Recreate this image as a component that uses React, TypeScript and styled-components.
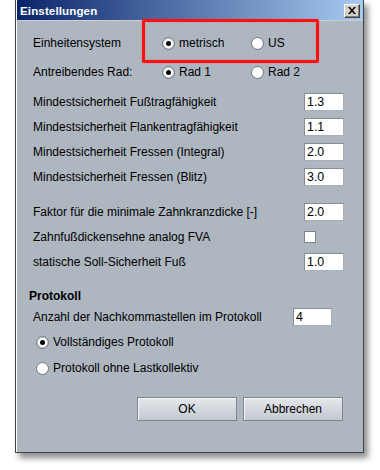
import React from "react";
import styled, { createGlobalStyle, css } from "styled-components";

const GlobalStyle = createGlobalStyle`
  html, body {
    margin: 0;
    padding: 0;
    background: #ffffff;
  }
  body {
    font-family: "Liberation Sans", Arial, sans-serif;
    font-size: 12px;
    color: #000;
  }
`;

const Page = styled.div`
  position: relative;
  width: 380px;
  height: 470px;
  overflow: hidden;
`;

const Window = styled.div`
  margin-left: 15px;
  width: 349px;
  box-sizing: border-box;
  border: 1px solid #3f4246;
  border-top: 0;
  background: #aeb6c0;
  box-shadow: inset 1px 0 0 #ffffff, 4px 5px 6px rgba(0, 0, 0, 0.45);
  display: flex;
  flex-direction: column;
`;

const TitleBar = styled.div`
  height: 20px;
  margin-left: 1px;
  display: flex;
  align-items: center;
  justify-content: space-between;
  padding: 0 3px 0 3px;
  background: linear-gradient(to right, #0a246a, #a6caf0);
  border-bottom: 1px solid #c9d0d8;
`;

const Title = styled.span`
  color: #ffffff;
  font-weight: bold;
  font-size: 11.6px;
  letter-spacing: 0.1px;
`;

const CloseButton = styled.div`
  width: 16px;
  height: 14px;
  box-sizing: border-box;
  margin-top: 1px;
  background: #d4d0c8;
  border: 1px solid;
  border-color: #ffffff #404040 #404040 #ffffff;
  box-shadow: inset -1px -1px 0 #808080;
  display: flex;
  align-items: center;
  justify-content: center;
`;

const Body = styled.div`
  display: flex;
  flex-direction: column;
  padding: 0 19px 31px 17px;
`;

const Row = styled.div<{ $top: number; $h?: number }>`
  display: flex;
  align-items: center;
  justify-content: space-between;
  height: ${(p) => p.$h ?? 18}px;
  margin-top: ${(p) => p.$top}px;
`;

const RadioRow = styled.div<{ $top: number }>`
  display: grid;
  grid-template-columns: 129px 89px 1fr;
  align-items: center;
  height: 18px;
  margin-top: ${(p) => p.$top}px;
`;

const Label = styled.span`
  white-space: nowrap;
`;

const Heading = styled.div<{ $top: number }>`
  font-weight: bold;
  height: 16px;
  line-height: 16px;
  margin-top: ${(p) => p.$top}px;
  margin-left: -4px;
`;

const AnzahlRow = styled.div<{ $top: number }>`
  display: grid;
  grid-template-columns: 260px 39px;
  align-items: center;
  height: 18px;
  margin-top: ${(p) => p.$top}px;
`;

const Field = styled.div<{ $w?: number }>`
  width: ${(p) => p.$w ?? 40}px;
  height: 18px;
  box-sizing: border-box;
  background: #ffffff;
  border: 1px solid #868c94;
  border-right-color: #a9afb6;
  border-bottom-color: #a9afb6;
  padding: 0 2px;
  line-height: 16px;
  font-size: 12.4px;
`;

const Check = styled.span`
  width: 12px;
  height: 12px;
  box-sizing: border-box;
  background: #ffffff;
  border: 1px solid #7d838b;
  margin-right: 28px;
`;

const RadioItem = styled.label<{ $top?: number; $indent?: number }>`
  display: flex;
  align-items: center;
  gap: 4px;
  margin-top: ${(p) => p.$top ?? 0}px;
  margin-left: ${(p) => p.$indent ?? 0}px;
  height: 16px;
`;

const RadioDot = styled.span<{ $on?: boolean }>`
  position: relative;
  width: 13px;
  height: 13px;
  box-sizing: border-box;
  border-radius: 50%;
  border: 1px solid #737a82;
  background: radial-gradient(circle at 45% 40%, #ffffff 55%, #dde1e5 100%);
  ${(p) =>
    p.$on &&
    css`
      box-shadow: inset 0 0 0 1px #c9ced4;
      &::after {
        content: "";
        position: absolute;
        left: 3px;
        top: 3px;
        width: 5px;
        height: 5px;
        border-radius: 50%;
        background: #000;
      }
    `}
`;

const Buttons = styled.div`
  display: flex;
  justify-content: flex-end;
  gap: 6px;
  margin-top: 21px;
  padding-right: 1px;
`;

const Button = styled.button`
  width: 100px;
  height: 24px;
  font-family: "Liberation Sans", Arial, sans-serif;
  font-size: 12px;
  color: #000;
  border: 1px solid #7f868e;
  background: linear-gradient(to bottom, #e4e7eb, #c3c9d0);
  box-shadow: inset 1px 1px 0 #f4f6f8;
  padding: 0;
`;

const Annotation = styled.div`
  position: absolute;
  left: 142px;
  top: 19px;
  width: 177px;
  height: 44px;
  box-sizing: border-box;
  border: 3px solid #ff1010;
  border-radius: 2px;
  box-shadow: 0 0 1px #ff3030, inset 0 0 1px #ff3030;
`;

function Radio({ on, children }: { on?: boolean; children: React.ReactNode }) {
  return (
    <RadioItem>
      <RadioDot $on={on} />
      {children}
    </RadioItem>
  );
}

export default function App() {
  return (
    <Page>
      <GlobalStyle />
      <Window>
        <TitleBar>
          <Title>Einstellungen</Title>
          <CloseButton>
            <svg width="8" height="7" viewBox="0 0 8 7">
              <path d="M0 0h2l2 2.3L6 0h2L5 3.5 8 7H6L4 4.7 2 7H0l3-3.5z" fill="#000" />
            </svg>
          </CloseButton>
        </TitleBar>
        <Body>
          <RadioRow $top={13}>
            <Label>Einheitensystem</Label>
            <Radio on>metrisch</Radio>
            <Radio>US</Radio>
          </RadioRow>
          <RadioRow $top={11}>
            <Label>Antreibendes Rad:</Label>
            <Radio on>Rad 1</Radio>
            <Radio>Rad 2</Radio>
          </RadioRow>
          <Row $top={12}>
            <Label>Mindestsicherheit Fußtragfähigkeit</Label>
            <Field>1.3</Field>
          </Row>
          <Row $top={7}>
            <Label>Mindestsicherheit Flankentragfähigkeit</Label>
            <Field>1.1</Field>
          </Row>
          <Row $top={7}>
            <Label>Mindestsicherheit Fressen (Integral)</Label>
            <Field>2.0</Field>
          </Row>
          <Row $top={7}>
            <Label>Mindestsicherheit Fressen (Blitz)</Label>
            <Field>3.0</Field>
          </Row>
          <Row $top={17}>
            <Label>Faktor für die minimale Zahnkranzdicke [-]</Label>
            <Field>2.0</Field>
          </Row>
          <Row $top={7}>
            <Label>Zahnfußdickensehne analog FVA</Label>
            <Check />
          </Row>
          <Row $top={7}>
            <Label>statische Soll-Sicherheit Fuß</Label>
            <Field>1.0</Field>
          </Row>
          <Heading $top={17}>Protokoll</Heading>
          <AnzahlRow $top={4}>
            <Label>Anzahl der Nachkommastellen im Protokoll</Label>
            <Field $w={39}>4</Field>
          </AnzahlRow>
          <RadioItem $top={8} $indent={3}>
            <RadioDot $on />
            Vollständiges Protokoll
          </RadioItem>
          <RadioItem $top={10} $indent={3}>
            <RadioDot />
            Protokoll ohne Lastkollektiv
          </RadioItem>
          <Buttons>
            <Button>OK</Button>
            <Button>Abbrechen</Button>
          </Buttons>
        </Body>
      </Window>
      <Annotation />
    </Page>
  );
}
